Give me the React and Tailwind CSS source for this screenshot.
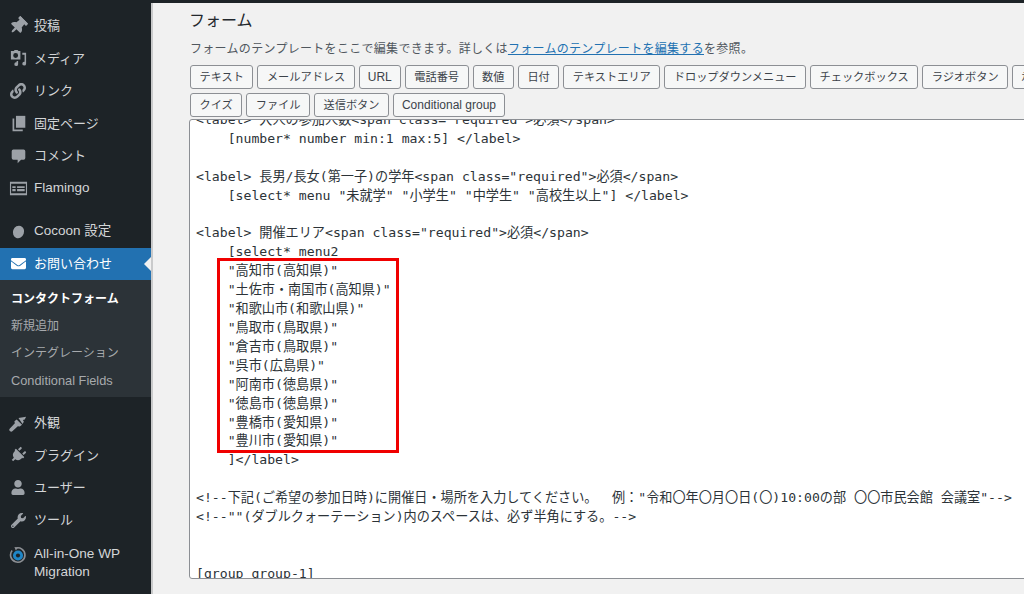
import React from 'react';
import { FaThumbtack, FaLink, FaPlug, FaUser, FaWrench, FaEnvelope } from 'react-icons/fa';

const sansFont = 'font-["Liberation_Sans","Noto_Sans_CJK_JP",sans-serif]';

const MediaIcon = ({ className }) => (
    <svg viewBox="0 0 20 20" className={className} fill="currentColor">
        <path d="M2 2h3l1-1h3l1 1h2v9H2V2zm5 2.200a2.600 2.600 0 1 0 0 5.200 2.600 2.600 0 0 0 0-5.200z" fillRule="evenodd" />
        <path d="M14 4h4v11.500a2 2 0 1 1-1.600-2V6h-2.400V4zM8 12.500h1.600V16a2 2 0 1 1-1.600-2v-1.500z" />
    </svg>
);

const PagesIcon = ({ className }) => (
    <svg viewBox="0 0 20 20" className={className} fill="currentColor">
        <path d="M7 1h11v14H7z" />
        <path d="M5 4v13h10v2H3V4z" />
    </svg>
);

const CommentIcon = ({ className }) => (
    <svg viewBox="0 0 20 20" className={className} fill="currentColor">
        <path d="M4 3h12a2 2 0 0 1 2 2v8a2 2 0 0 1-2 2h-3l-4 4v-4H4a2 2 0 0 1-2-2V5a2 2 0 0 1 2-2z" />
    </svg>
);

const FlamingoIcon = ({ className }) => (
    <svg viewBox="0 0 20 20" className={className} fill="currentColor">
        <path
            fillRule="evenodd"
            d="M1 3h18v14H1V3zm1.200 2v10h15.600V5H2.200zM3.500 7.500h3.500v2H3.500v-2zm0 3h3.500v2.500H3.500v-2.500zM8.500 7.500h8v2h-8v-2zm0 3h8v2.500h-8v-2.500z"
        />
    </svg>
);

const CocoonIcon = ({ className }) => (
    <svg viewBox="0 0 20 20" className={className} fill="currentColor">
        <ellipse cx="10" cy="10.500" rx="6.500" ry="7.500" transform="rotate(20 10 10.500)" />
    </svg>
);

const BrushIcon = ({ className }) => (
    <svg viewBox="0 0 20 20" className={className} fill="currentColor">
        <path d="M10.500 4.500 19 3l-1.500 3-2 .8 1 1.700-1.500 2.500z" />
        <path d="M8.500 6l6 6-2.500 2-2.200-.5L4 19a2 2 0 0 1-3-3l5.500-5.800L6 8z" />
    </svg>
);

const MigrationIcon = ({ className }) => (
    <svg viewBox="0 0 20 20" className={className} fill="none">
        <path d="M7 2.500A8 8 0 1 1 3.500 5" stroke="#8c8f94" strokeWidth="1.800" />
        <circle cx="10" cy="10.500" r="5.600" fill="#1f86c7" />
        <circle cx="10" cy="10.500" r="2.300" fill="#1d2327" />
        <path d="M6 1l4 1-2.500 3z" fill="#8c8f94" />
    </svg>
);

const topItems = [
    { label: '投稿', Icon: FaThumbtack, iconClass: 'w-[18px] h-[18px] rotate-45' },
    { label: 'メディア', Icon: MediaIcon, iconClass: 'w-[19px] h-[19px]' },
    { label: 'リンク', Icon: FaLink, iconClass: 'w-[16px] h-[16px]' },
    { label: '固定ページ', Icon: PagesIcon, iconClass: 'w-[17px] h-[17px]' },
    { label: 'コメント', Icon: CommentIcon, iconClass: 'w-[17px] h-[17px]' },
    { label: 'Flamingo', Icon: FlamingoIcon, iconClass: 'w-[19px] h-[19px]', textClass: 'text-[13.500px]' },
];

const bottomItems = [
    { label: '外観', Icon: BrushIcon, iconClass: 'w-[18px] h-[18px]' },
    { label: 'プラグイン', Icon: FaPlug, iconClass: 'w-[16px] h-[16px] rotate-45' },
    { label: 'ユーザー', Icon: FaUser, iconClass: 'w-[14px] h-[15px]' },
    { label: 'ツール', Icon: FaWrench, iconClass: 'w-[15px] h-[15px]' },
];

const tagsRow1 = ['テキスト', 'メールアドレス', 'URL', '電話番号', '数値', '日付', 'テキストエリア', 'ドロップダウンメニュー', 'チェックボックス', 'ラジオボタン', '承諾確認'];
const tagsRow2 = ['クイズ', 'ファイル', '送信ボタン', 'Conditional group'];

const formBody = `<label> 大人の参加人数<span class="required">必須</span>
    [number* number min:1 max:5] </label>

<label> 長男/長女(第一子)の学年<span class="required">必須</span>
    [select* menu "未就学" "小学生" "中学生" "高校生以上"] </label>

<label> 開催エリア<span class="required">必須</span>
    [select* menu2
    "高知市(高知県)"
    "土佐市・南国市(高知県)"
    "和歌山市(和歌山県)"
    "鳥取市(鳥取県)"
    "倉吉市(鳥取県)"
    "呉市(広島県)"
    "阿南市(徳島県)"
    "徳島市(徳島県)"
    "豊橋市(愛知県)"
    "豊川市(愛知県)"
    ]</label>

<!--下記(ご希望の参加日時)に開催日・場所を入力してください。　 例："令和〇年〇月〇日(〇)10:00の部 〇〇市民会館 会議室"-->
<!--""(ダブルクォーテーション)内のスペースは、必ず半角にする。-->


[group group-1]`;

const NavItem = ({ label, Icon, iconClass, textClass = 'text-[13px]' }) => (
    <div className="flex h-[32.400px] items-center text-[#d3d5d7]">
        <span className="flex w-[34px] shrink-0 justify-center pl-[2px] text-[#9ca1a7]">
            <Icon className={iconClass} />
        </span>
        <span className={textClass}>{label}</span>
    </div>
);

const TagButton = ({ children }) => {
    const latin = /^[A-Za-z ]+$/.test(children);
    return (
        <span
            className={
                latin
                    ? 'flex h-[24px] shrink-0 items-center rounded-[3px] border border-[#8c8f94] bg-[#f6f7f7] px-[8px] text-[12px] whitespace-nowrap text-[#3c434a]'
                    : 'flex h-[24px] shrink-0 items-center rounded-[3px] border border-[#8c8f94] bg-[#f6f7f7] px-[8.500px] text-[11.200px] whitespace-nowrap text-[#3c434a]'
            }
        >
            {children}
        </span>
    );
};

const App = () => {
    return (
        <div className={`flex h-[594px] w-[1024px] flex-col overflow-hidden bg-[#f1f1f1] ${sansFont}`}>
            <div className="h-[3px] shrink-0 bg-[#1d2327]" />
            <div className="flex min-h-0 flex-1">
                {/* Sidebar */}
                <aside className="w-[151px] shrink-0 bg-[#1d2327] pt-[7px]">
                    {topItems.map((item) => (
                        <NavItem key={item.label} {...item} />
                    ))}
                    <div className="mt-[11px]">
                        <NavItem label="Cocoon 設定" Icon={CocoonIcon} iconClass="w-[17px] h-[17px]" textClass="text-[13.500px]" />
                    </div>
                    <div className="relative flex h-[32px] items-center bg-[#2271b1] text-[13px] text-white">
                        <span className="flex w-[34px] shrink-0 justify-center pl-[2px]">
                            <FaEnvelope className="h-[15px] w-[17px]" />
                        </span>
                        <span>お問い合わせ</span>
                        <span className="absolute top-[9px] right-0 border-y-[7px] border-r-[7px] border-y-transparent border-r-[#f1f1f1]" />
                    </div>
                    <div className="bg-[#2c3338] pt-[6px] pb-[3px] pl-[11px] text-[12px] text-[#a7aaad]">
                        <div className="flex h-[27px] items-center font-bold text-white">コンタクトフォーム</div>
                        <div className="flex h-[27px] items-center">新規追加</div>
                        <div className="flex h-[27px] items-center">インテグレーション</div>
                        <div className="flex h-[27px] items-center text-[12.800px]">Conditional Fields</div>
                    </div>
                    <div className="pt-[10px]">
                        {bottomItems.map((item) => (
                            <NavItem key={item.label} {...item} />
                        ))}
                        <div className="mt-[9px] flex text-[13.600px] leading-[17.500px] text-[#d3d5d7]">
                            <span className="flex w-[34px] shrink-0 justify-center pt-[1px] pl-[2px]">
                                <MigrationIcon className="h-[18px] w-[18px]" />
                            </span>
                            <span>
                                All-in-One WP
                                <br />
                                Migration
                            </span>
                        </div>
                    </div>
                </aside>

                {/* Main */}
                <main className="min-w-0 flex-1 overflow-hidden border-l-2 border-[#c9cacb] pl-[36px]">
                    <h1 className="mt-[7px] text-[16px] leading-[22px] font-normal text-[#23282d]">フォーム</h1>
                    <p className="mt-[8px] ml-px text-[12px] leading-[18px] tracking-[0.300px] whitespace-nowrap text-[#50575e]">
                        フォームのテンプレートをここで編集できます。詳しくは
                        <span className="text-[#2271b1] underline">フォームのテンプレートを編集する</span>
                        を参照。
                    </p>
                    <div className="mt-[7px] ml-px flex w-[900px] gap-x-[4px]">
                        {tagsRow1.map((tag) => (
                            <TagButton key={tag}>{tag}</TagButton>
                        ))}
                    </div>
                    <div className="mt-[4px] ml-px flex gap-x-[4px]">
                        {tagsRow2.map((tag) => (
                            <TagButton key={tag}>{tag}</TagButton>
                        ))}
                    </div>

                    {/* Template editor */}
                    <div className="relative mt-[2px] h-[460px] w-[900px] overflow-hidden rounded-[3px] border border-[#8c8f94] bg-white">
                        <pre className="-mt-[9px] pl-[6px] font-['DejaVu_Sans_Mono','Noto_Sans_CJK_JP',monospace] text-[13.150px] leading-[18.900px] whitespace-pre text-[#2c3338]">
                            {formBody}
                        </pre>
                        <div className="absolute top-[138px] left-[27px] h-[195px] w-[182px] border-[3px] border-[#f00000]" />
                    </div>
                </main>
            </div>
        </div>
    );
};

export default App;
